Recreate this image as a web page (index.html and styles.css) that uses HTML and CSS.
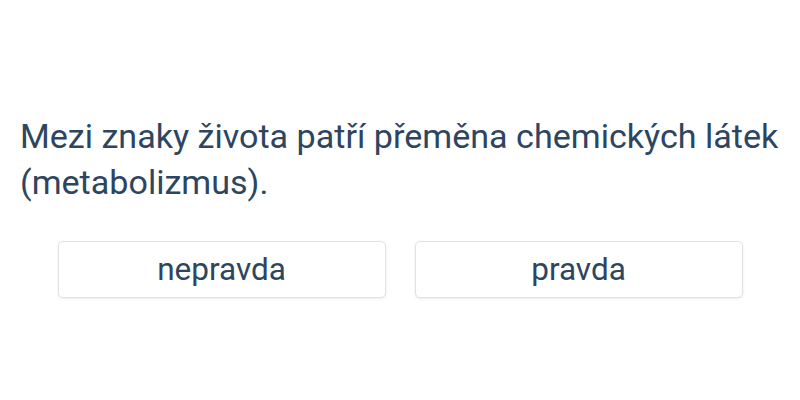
FILE: index.html
```html
<!DOCTYPE html>
<html lang="cs">
  <head>
    <meta charset="UTF-8" />
    <title>Kvíz</title>
    <link rel="stylesheet" href="styles.css">
  </head>
  <body>
    <div class="container">
      <div class="question">
        <p class="question-text">Mezi znaky života patří přeměna chemických látek (metabolizmus).</p>
        <div class="answers">
          <button class="answer">nepravda</button>
          <button class="answer">pravda</button>
        </div>
      </div>
    </div>
  </body>
</html>
```

FILE: styles.css
```css
* {
  margin: 0;
  padding: 0;
  box-sizing: border-box;
}

body {
  font-family: Roboto, "Liberation Sans", sans-serif;
  color: #2d4560;
  background: #fff;
}

.container {
  height: 400px;
  display: flex;
  align-items: center;
  padding: 0 20px;
}

.question {
  width: 100%;
  padding-top: 10px;
}

.question-text {
  font-size: 34.1px;
  line-height: 46px;
}

.answers {
  display: flex;
  justify-content: center;
  gap: 29px;
  margin-top: 36px;
}

.answer {
  width: 328px;
  height: 57px;
  border: 1px solid #e2e2e2;
  border-radius: 5px;
  background: #fff;
  box-shadow: 0 1px 3px rgba(0, 0, 0, 0.08);
  font-family: inherit;
  font-size: 31.5px;
  color: #2d4560;
}
```
